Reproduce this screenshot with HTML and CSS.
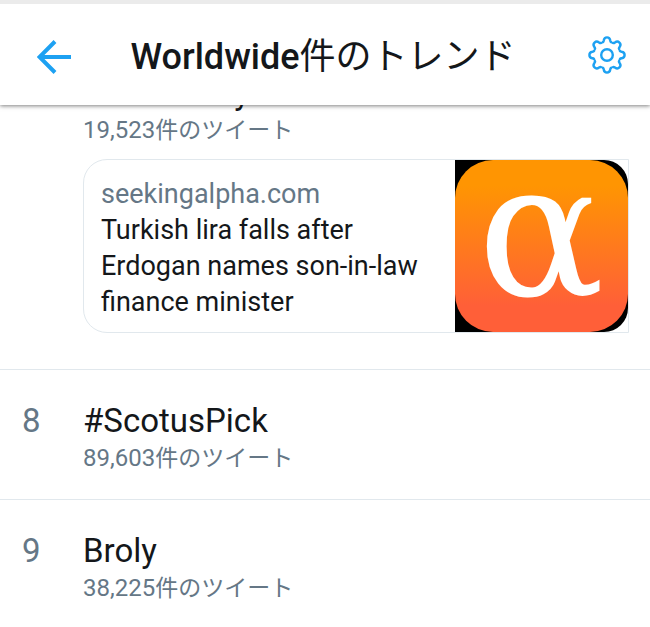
FILE: index.html
```html
<!DOCTYPE html>
<html lang="ja">

<head>
  <meta charset="UTF-8">
  <meta name="viewport" content="width=device-width, initial-scale=1.0">
  <title>Worldwide件のトレンド</title>
  <link rel="stylesheet" href="styles.css">
</head>

<body>
  <header class="header">
    <button class="icon-btn" type="button" aria-label="戻る">
      <svg class="icon-back" viewBox="0 0 36 36">
        <path d="M34 18H3M18 2.500L2.500 18l15.500 15.500" />
      </svg>
    </button>
    <h1 class="header-title">Worldwide<span class="header-sub">件のトレンド</span></h1>
    <button class="icon-btn settings" type="button" aria-label="設定">
      <svg class="icon-gear" viewBox="-20 -20 40 40">
        <defs>
          <path id="tooth" d="M-5.400 -13C-3.600 -12.300 -3.500 -13.300 -3.200 -14.800C-2.900 -16.700 -1.700 -17.600 0 -17.600S2.900 -16.700 3.200 -14.800C3.500 -13.300 3.600 -12.300 5.400 -13" />
        </defs>
        <use href="#tooth" />
        <use href="#tooth" transform="rotate(45)" />
        <use href="#tooth" transform="rotate(90)" />
        <use href="#tooth" transform="rotate(135)" />
        <use href="#tooth" transform="rotate(180)" />
        <use href="#tooth" transform="rotate(225)" />
        <use href="#tooth" transform="rotate(270)" />
        <use href="#tooth" transform="rotate(315)" />
        <circle r="5.800" />
      </svg>
    </button>
  </header>

  <ol class="trends">
    <li class="trend">
      <span class="rank">7</span>
      <div class="trend-body">
        <h2 class="trend-name">Berat Albayrak</h2>
        <p class="trend-count">19,523<span class="unit">件のツイート</span></p>
        <a class="card" href="#">
          <div class="card-text">
            <p class="card-site">seekingalpha.com</p>
            <p class="card-title">Turkish lira falls after Erdogan names son-in-law finance minister</p>
          </div>
          <svg class="card-img" viewBox="0 0 173 172">
            <defs>
              <linearGradient id="orange" x1="0" y1="0" x2="0" y2="1">
                <stop offset="0.150" stop-color="#ff9502" />
                <stop offset="0.850" stop-color="#ff5f38" />
              </linearGradient>
            </defs>
            <rect width="173" height="172" fill="#000" />
            <rect width="173" height="172" rx="38" fill="url(#orange)" />
            <text class="alpha" x="86" y="135" text-anchor="middle">α</text>
          </svg>
        </a>
      </div>
    </li>
    <li class="trend">
      <span class="rank">8</span>
      <div class="trend-body">
        <h2 class="trend-name">#ScotusPick</h2>
        <p class="trend-count">89,603<span class="unit">件のツイート</span></p>
      </div>
    </li>
    <li class="trend">
      <span class="rank">9</span>
      <div class="trend-body">
        <h2 class="trend-name">Broly</h2>
        <p class="trend-count">38,225<span class="unit">件のツイート</span></p>
      </div>
    </li>
  </ol>
</body>

</html>
```
FILE: styles.css
```css
* {
  padding: 0;
  margin: 0;
  box-sizing: border-box;
}

body {
  display: flex;
  flex-direction: column;
  height: 100vh;
  overflow: hidden;
  background-color: #fff;
  color: #14171a;
  font-family: Roboto, "Noto Sans CJK JP", sans-serif;
}

.header {
  display: flex;
  flex-shrink: 0;
  align-items: center;
  height: 105px;
  padding: 4px 23px 0 37px;
  border-top: 4px solid #ebebeb;
  background-color: #fff;
  box-shadow: 0 1px 4px rgba(0, 0, 0, .5);
  z-index: 1;
}

.header-title {
  flex: 1;
  padding-right: 14px;
  font-size: 36px;
  font-weight: 500;
  line-height: 48px;
  text-align: center;
}

.header-sub {
  font-weight: 400;
}

.icon-btn {
  display: flex;
  border: none;
  background: none;
  cursor: pointer;
}

.icon-btn svg {
  fill: none;
  stroke: #1da1f2;
}

.settings {
  padding-bottom: 4px;
}

.icon-back {
  width: 36px;
  height: 36px;
  stroke-width: 4;
}

.icon-gear {
  width: 40px;
  height: 40px;
  stroke-width: 2.400;
}

/* 途中までスクロールした状態 */
.trends {
  flex: 1;
  min-height: 0;
  margin-top: -63px;
  list-style: none;
}

.trend {
  display: flex;
  padding: 31px 21px 23px 22px;
  border-bottom: 1px solid #e1e8ed;
}

.rank {
  flex-shrink: 0;
  width: 61px;
  color: #657786;
  font-size: 33px;
  line-height: 40px;
}

.trend-body {
  flex: 1;
}

.trend-name {
  font-size: 33px;
  font-weight: 400;
  line-height: 40px;
}

.trend-count {
  color: #657786;
  font-size: 24px;
  line-height: 35px;
}

.unit {
  font-size: 23px;
}

.card {
  display: flex;
  margin: 11px 0 13px;
  border: 1px solid #e1e8ed;
  border-radius: 24px 0 0 24px;
  color: inherit;
  text-decoration: none;
}

.card-text {
  flex: 1;
  padding: 16px 17px 12px;
  font-size: 27px;
  line-height: 36px;
}

.card-site {
  color: #657786;
}

.card-img {
  flex-shrink: 0;
  width: 173px;
  height: 172px;
  border-radius: 0 24px 24px 0;
}

.alpha {
  fill: #fff;
  font-family: "DejaVu Serif", serif;
  font-size: 188px;
}
```
